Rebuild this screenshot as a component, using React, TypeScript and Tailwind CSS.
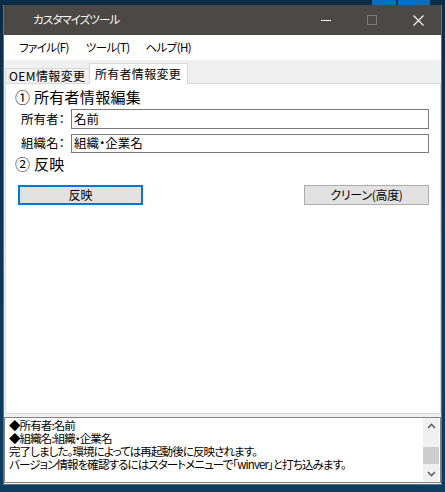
import React from 'react';

const jp = { fontFamily: '"Noto Sans CJK JP", "Noto Sans", sans-serif' };

const logLines = [
  '◆所有者:名前',
  '◆組織名:組織・企業名',
  '完了しました。環境によっては再起動後に反映されます。',
  'バージョン情報を確認するにはスタートメニューで「winver」と打ち込みます。',
];

export default function App() {
  return (
    <div
      className="relative w-[445px] h-[492px] overflow-hidden bg-gradient-to-b from-[#0b2c47] via-[#0d3555] to-[#0a3f63] pt-[5px] pl-[3px] [font-feature-settings:'palt']"
      style={jp}
    >
      {/* desktop tiles peeking above the window */}
      <div className="absolute top-0 left-[372px] w-[24px] h-[5px] bg-[#0a6fc0]" />
      <div className="absolute top-0 left-[398px] w-[32px] h-[5px] bg-[#0a6fc0]" />

      <div className="flex flex-col w-[439px] h-[480px] border-x border-b border-[#6e6e6e] bg-[#f0f0f0]">
        {/* title bar */}
        <div className="flex items-center h-[30px] bg-[#4b4845] text-white">
          <span className="pl-[29px] text-[11.5px] tracking-[-0.9px] flex-1">カスタマイズツール</span>
          <div className="flex h-full">
            <div className="w-[46px] flex items-center justify-center">
              <div className="w-[10px] h-px bg-white" />
            </div>
            <div className="w-[46px] flex items-center justify-center">
              <div className="w-[10px] h-[10px] border border-[#7d7a78]" />
            </div>
            <div className="w-[46px] flex items-center justify-center">
              <svg width="11" height="11" viewBox="0 0 11 11">
                <path d="M0.5 0.5 L10.5 10.5 M10.5 0.5 L0.5 10.5" stroke="white" strokeWidth="1.1" />
              </svg>
            </div>
          </div>
        </div>

        {/* menu bar */}
        <div className="flex items-center h-[25px] bg-white text-[11.5px] tracking-[-0.6px] text-black">
          <span className="ml-[15px]">ファイル(F)</span>
          <span className="ml-[17px]">ツール(T)</span>
          <span className="ml-[16px]">ヘルプ(H)</span>
        </div>

        {/* tabs */}
        <div className="flex items-end h-[23px] pl-[1px] pt-[3px]">
          <div className="h-[15px] px-[3px] flex items-center border-l border-t border-[#d9d9d9] bg-[#f0f0f0] text-[12px] tracking-[0.4px]">
            OEM情報変更
          </div>
          <div className="h-[21px] w-[99px] flex items-center justify-center border-x border-t border-[#d9d9d9] bg-white text-[12px] tracking-[0.3px] -mb-px relative">
            所有者情報変更
          </div>
        </div>

        {/* tab panel */}
        <div className="ml-[1px] h-[331px] border border-[#d9d9d9] bg-white flex flex-col pl-[9px] pr-[11px]">
          <div className="mt-[4px] text-[15px] tracking-[0.3px] leading-[18px]">① 所有者情報編集</div>
          <div className="flex items-center mt-[3px]">
            <span className="w-[56px] pl-[6px] text-[12.5px]">所有者：</span>
            <div className="flex-1 h-[20px] border border-[#7a7a7a] flex items-center pl-[2px] text-[12.5px]">名前</div>
          </div>
          <div className="flex items-center mt-[5px]">
            <span className="w-[56px] pl-[6px] text-[12.5px]">組織名：</span>
            <div className="flex-1 h-[19px] border border-[#7a7a7a] flex items-center pl-[2px] text-[12.5px]">組織・企業名</div>
          </div>
          <div className="mt-[1px] text-[15px] tracking-[0.3px] leading-[20px]">② 反映</div>
          <div className="flex justify-between mt-[11px] pl-[3px]">
            <button className="w-[125px] h-[20px] border-2 border-[#0078d7] bg-[#e1e1e1] text-[12px] leading-none">反映</button>
            <button className="w-[125px] h-[20px] border border-[#adadad] bg-[#e1e1e1] text-[12px] tracking-[-0.3px] leading-none">クリーン(高度)</button>
          </div>
        </div>

        {/* log box */}
        <div className="mt-[3px] h-[66px] border border-[#828282] bg-white flex">
          <div className="flex-1 pl-[4px] pt-[1px] text-[11.5px] tracking-[-0.9px] leading-[13px] text-black">
            {logLines.map((l) => (
              <div key={l} className="whitespace-nowrap">{l}</div>
            ))}
          </div>
          <div className="w-[16px] bg-[#f0f0f0] flex flex-col items-center mr-px">
            <div className="h-[16px] flex items-center justify-center">
              <svg width="9" height="6" viewBox="0 0 9 6">
                <path d="M1 5 L4.5 1.5 L8 5" fill="none" stroke="#606060" strokeWidth="1.6" />
              </svg>
            </div>
            <div className="flex-1 w-full flex flex-col justify-end">
              <div className="h-[17px] w-full bg-[#cdcdcd] mb-[2px]" />
            </div>
            <div className="h-[16px] flex items-center justify-center">
              <svg width="9" height="6" viewBox="0 0 9 6">
                <path d="M1 1 L4.5 4.5 L8 1" fill="none" stroke="#606060" strokeWidth="1.6" />
              </svg>
            </div>
          </div>
        </div>
      </div>
    </div>
  );
}
